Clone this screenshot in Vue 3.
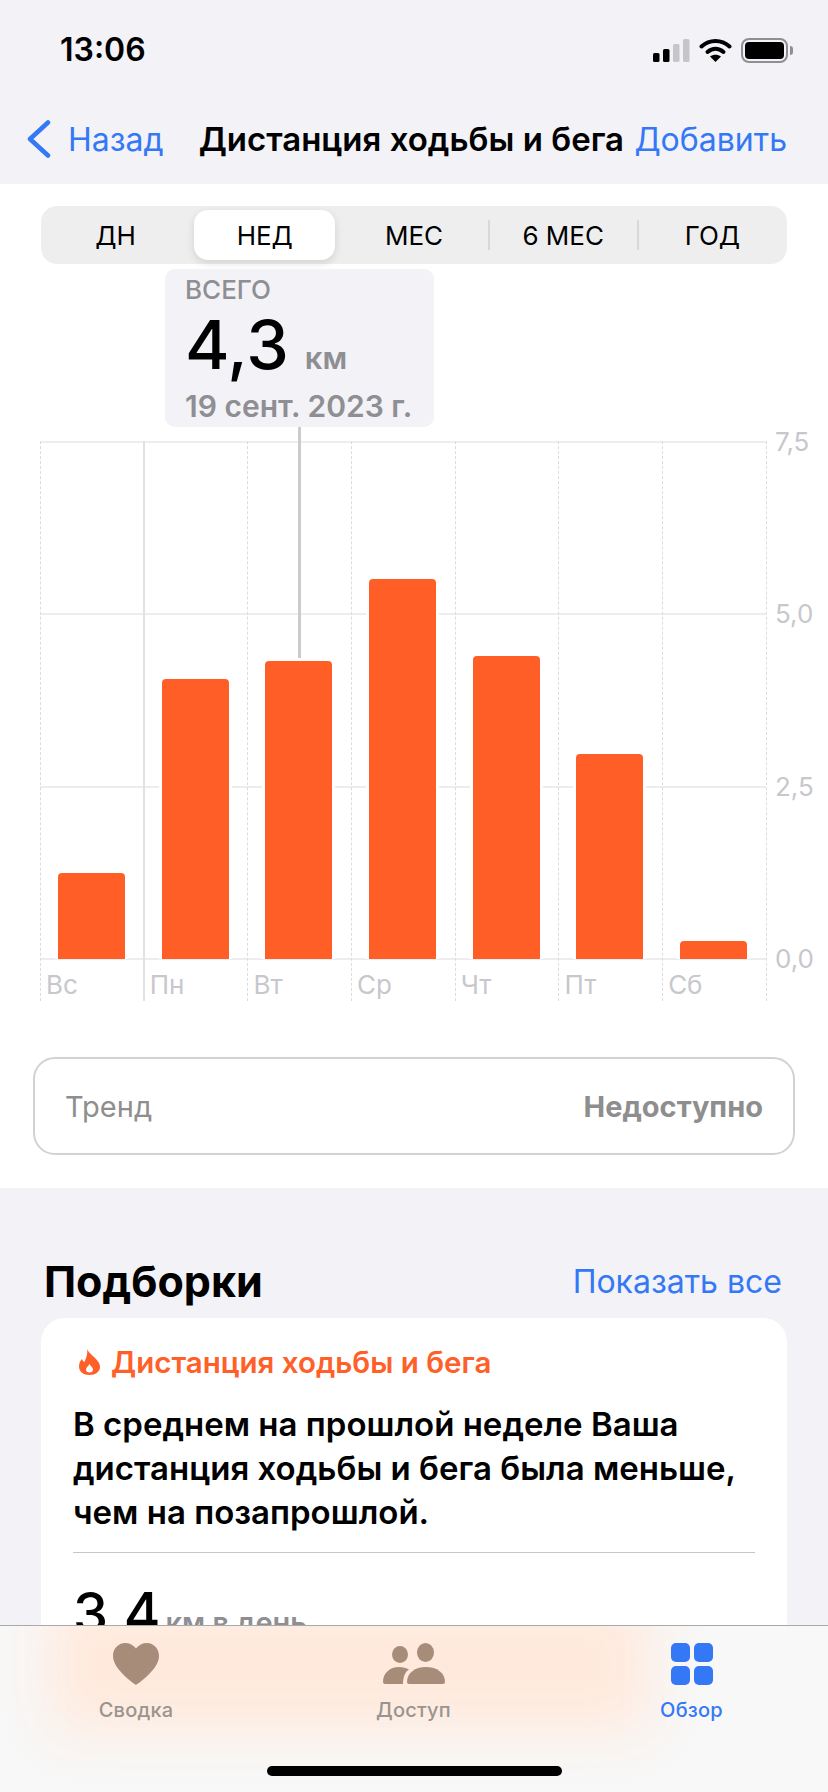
<script setup>
import { ref } from "vue";

const ranges = ref(["ДН", "НЕД", "МЕС", "6 МЕС", "ГОД"]);
const days = ref([
  { name: "Вс", height: 86 },
  { name: "Пн", height: 280 },
  { name: "Вт", height: 298 },
  { name: "Ср", height: 380 },
  { name: "Чт", height: 303 },
  { name: "Пт", height: 205 },
  { name: "Сб", height: 18 },
]);
const scale = ref(["7,5", "5,0", "2,5", "0,0"]);
</script>

<template>
  <div class="phone">
    <header class="top">
      <div class="status">
        <span class="time">13:06</span>
        <div class="status_icons">
          <svg width="37" height="23" viewBox="0 0 37 23">
            <rect x="0" y="14" width="6.500" height="9" rx="1.500" fill="#000" />
            <rect x="10" y="10" width="6.500" height="13" rx="1.500" fill="#000" />
            <rect x="20" y="5" width="6.500" height="18" rx="1.500" fill="#c6c6c8" />
            <rect x="30" y="0" width="6.500" height="23" rx="1.500" fill="#c6c6c8" />
          </svg>
          <svg width="33" height="24" viewBox="0 0 32 24">
            <path d="M2 8.500C10 1 22 1 30 8.500" fill="none" stroke="#000" stroke-width="4" stroke-linecap="round" />
            <path d="M8 14c5-4.300 11-4.300 16 0" fill="none" stroke="#000" stroke-width="4" stroke-linecap="round" />
            <path d="M16 24l-5.500-5.500c3.200-2.300 7.800-2.300 11 0z" fill="#000" />
          </svg>
          <div class="battery"><i></i></div>
        </div>
      </div>
      <nav class="nav">
        <a class="back">
          <svg width="26" height="38" viewBox="0 0 26 38">
            <path d="M22 2.500L4 19l18 16.500" fill="none" stroke="#3478f6" stroke-width="4.500" stroke-linecap="round" stroke-linejoin="round" />
          </svg>
          <span>Назад</span>
        </a>
        <h1>Дистанция ходьбы и бега</h1>
        <a class="add">Добавить</a>
      </nav>
    </header>

    <section class="sheet">
      <div class="segments">
        <div v-for="(r, i) in ranges" :key="r" class="segment" :class="{ active: i === 1, split: i > 2 }">{{ r }}</div>
      </div>

      <div class="chart_wrap">
        <div class="tooltip">
          <div class="tip_label">ВСЕГО</div>
          <div class="tip_value">4,3<small>км</small></div>
          <div class="tip_date">19 сент. 2023 г.</div>
        </div>
        <div class="tip_line"></div>

        <div class="chart">
          <div class="plot">
            <div class="h_lines">
              <i v-for="s in scale" :key="s"></i>
            </div>
            <div class="days">
              <div v-for="(d, i) in days" :key="d.name" class="day" :class="{ solid: i === 1 }">
                <div class="bar_area">
                  <div class="bar" :style="{ height: d.height + 'px' }"></div>
                </div>
                <div class="day_name">{{ d.name }}</div>
              </div>
            </div>
          </div>
          <div class="scale">
            <span v-for="s in scale" :key="s">{{ s }}</span>
          </div>
        </div>
      </div>

      <div class="trend">
        <span>Тренд</span>
        <b>Недоступно</b>
      </div>
    </section>

    <section class="picks">
      <div class="picks_head">
        <h2>Подборки</h2>
        <a>Показать все</a>
      </div>
      <div class="card">
        <div class="card_title">
          <svg width="21" height="26" viewBox="0 0 21 26">
            <path fill-rule="evenodd" d="M8 0C9 3 12 5 15 8 18.500 11.500 21 14 21 18 21 22.500 16.500 26 10.500 26 4.500 26 0 22.500 0 17.500 0 14 1.500 11.500 3 10 3.500 11.500 4.500 12.500 5.500 13 7 9 9 5 8 0zM10.500 15C9.500 17 7 18.500 7 20.500 7 22.500 8.500 23.500 10.500 23.500 12.500 23.500 14 22.500 14 20.500 14 18.500 11.500 17 10.500 15z" fill="#ff6029" />
          </svg>
          <span>Дистанция ходьбы и бега</span>
        </div>
        <p>В среднем на прошлой неделе Ваша дистанция ходьбы и бега была меньше, чем на позапрошлой.</p>
        <div class="card_line"></div>
        <div class="card_value">3,4<small>км в день</small></div>
      </div>
    </section>

    <footer class="tabs">
      <div class="tabs_glow"></div>
      <div class="tab">
        <svg width="46" height="42" viewBox="0 0 46 42">
          <path d="M23 42C23 42 0 27 0 13 0 5.500 5.500 0 12 0 16.500 0 20.500 2 23 5.500 25.500 2 29.500 0 34 0 40.500 0 46 5.500 46 13 46 27 23 42 23 42z" fill="#a88c7a" />
        </svg>
        <span>Сводка</span>
      </div>
      <div class="tab">
        <svg width="62" height="42" viewBox="0 0 62 42">
          <ellipse cx="17" cy="11.500" rx="8" ry="8.500" fill="#a88c7a" />
          <ellipse cx="42.500" cy="9.500" rx="8.500" ry="9.500" fill="#a88c7a" />
          <path d="M0 39C0 30 7 24 16 24 20 24 23.500 25 26 26.500 22 29 20 34 20 41H2C1 41 0 40 0 39z" fill="#a88c7a" />
          <path d="M24 39C24 30 32 24 43 24 54 24 62 30 62 39 62 40 61 41 60 41H26C25 41 24 40 24 39z" fill="#a88c7a" />
        </svg>
        <span>Доступ</span>
      </div>
      <div class="tab current">
        <div class="grid_icon"><i></i><i></i><i></i><i></i></div>
        <span>Обзор</span>
      </div>
      <div class="home"></div>
    </footer>
  </div>
</template>

<style scoped>
.phone {
  position: relative;
  width: 828px;
  height: 1792px;
  overflow: hidden;
  background: #f2f2f7;
  font-family: Inter, "Noto Sans", sans-serif;
  color: #000;
}

.top {
  height: 184px;
  display: flex;
  flex-direction: column;
}

.status {
  height: 100px;
  display: flex;
  justify-content: space-between;
  align-items: center;
  padding: 0 34px 0 60px;
}

.time {
  font-size: 32px;
  font-weight: 600;
  margin-top: -2px;
}

.status_icons {
  display: flex;
  align-items: center;
  gap: 9px;
}

.battery {
  position: relative;
  width: 47px;
  height: 25px;
  box-sizing: border-box;
  border: 2px solid #8e8e93;
  border-radius: 8px;
  padding: 2px;
  margin-right: 6px;
}

.battery i {
  display: block;
  height: 100%;
  background: #000;
  border-radius: 4px;
}

.battery::after {
  content: "";
  position: absolute;
  right: -7px;
  top: 6px;
  width: 3px;
  height: 9px;
  background: #8e8e93;
  border-radius: 0 3px 3px 0;
}

.nav {
  display: flex;
  align-items: center;
  height: 52px;
  padding: 13px 41px 0 26px;
  font-size: 32px;
  color: #3478f6;
}

.back {
  display: flex;
  align-items: center;
  gap: 16px;
}

.nav h1 {
  margin: 0 0 0 35px;
  font-size: 33px;
  font-weight: 600;
  color: #000;
}

.add {
  margin-left: auto;
}

.sheet {
  height: 1004px;
  background: #fff;
  padding-top: 22px;
  box-sizing: border-box;
}

.segments {
  display: flex;
  margin: 0 41px;
  height: 58px;
  padding: 4px 0;
  box-sizing: border-box;
  background: #eeeeef;
  border-radius: 16px;
  font-size: 26px;
}

.segment {
  position: relative;
  flex: 1;
  display: flex;
  align-items: center;
  justify-content: center;
  margin: 0 4px;
}

.segment.active {
  background: #fff;
  border-radius: 14px;
  box-shadow: 0 3px 8px rgba(0, 0, 0, 0.12);
}

.segment.split::before {
  content: "";
  position: absolute;
  left: -5px;
  top: 10px;
  bottom: 10px;
  width: 2px;
  background: #d8d8da;
}

.chart_wrap {
  position: relative;
  margin-top: 177px;
}

.tooltip {
  position: absolute;
  left: 165px;
  top: -172px;
  width: 269px;
  height: 158px;
  box-sizing: border-box;
  padding: 5px 20px;
  background: #f2f2f7;
  border-radius: 10px;
  color: #8e8e93;
  font-weight: 600;
  z-index: 2;
}

.tip_label {
  font-size: 26px;
  line-height: 32px;
  font-weight: 500;
}

.tip_value {
  font-size: 68px;
  line-height: 68px;
  font-weight: 500;
  color: #000;
  margin-top: 4px;
}

.tip_value small {
  font-size: 31px;
  font-weight: 600;
  color: #8e8e93;
  margin-left: 16px;
}

.tip_date {
  font-size: 30px;
  line-height: 36px;
  margin-top: -4px;
  white-space: nowrap;
}

.tip_line {
  position: absolute;
  left: 298px;
  top: -14px;
  width: 3px;
  height: 231px;
  background: #cbcbcb;
  z-index: 2;
}

.chart {
  display: flex;
  height: 560px;
}

.plot {
  position: relative;
  width: 726px;
  margin-left: 40px;
}

.h_lines {
  position: absolute;
  left: 0;
  right: 0;
  top: 0;
  height: 519px;
  display: flex;
  flex-direction: column;
  justify-content: space-between;
}

.h_lines i {
  display: block;
  height: 2px;
  background: #ededef;
}

.days {
  position: relative;
  display: grid;
  grid-template-columns: repeat(7, 103.7px);
  height: 560px;
}

.days::after {
  content: "";
  position: absolute;
  right: -1px;
  top: 0;
  bottom: 0;
  border-right: 1px dashed #dcdcde;
}

.day {
  display: flex;
  flex-direction: column;
  border-left: 1px dashed #dcdcde;
}

.day.solid {
  border-left: 2px solid #e2e2e4;
  margin-left: -1px;
}

.bar_area {
  height: 518px;
  display: flex;
  align-items: flex-end;
  padding-left: 17px;
}

.day.solid .bar_area {
  padding-left: 17px;
}

.bar {
  width: 67px;
  background: #ff5f26;
  border-radius: 4px 4px 0 0;
  box-shadow: -3px 0 #fff, 3px 0 #fff;
}

.day_name {
  padding: 11px 0 0 5px;
  font-size: 26px;
  line-height: 30px;
  color: #c7c7cc;
}

.scale {
  display: flex;
  flex-direction: column;
  justify-content: space-between;
  height: 519px;
  margin-left: 9px;
  font-size: 26px;
  line-height: 24px;
  color: #c7c7cc;
}

.scale span {
  height: 2px;
  display: flex;
  align-items: center;
}

.trend {
  display: flex;
  align-items: center;
  justify-content: space-between;
  height: 98px;
  margin: 56px 33px 0;
  padding: 0 30px;
  box-sizing: border-box;
  border: 2px solid #d2d2d4;
  border-radius: 22px;
  font-size: 29px;
  color: #8e8e8e;
}

.picks {
  padding: 61px 41px 0;
}

.picks_head {
  display: flex;
  align-items: center;
  justify-content: space-between;
  height: 69px;
  padding: 0 5px 5px 3px;
  box-sizing: border-box;
}

.picks_head h2 {
  margin: 0;
  font-size: 43px;
  font-weight: 700;
}

.picks_head a {
  font-size: 32px;
  color: #3478f6;
}

.card {
  background: #fff;
  border-radius: 24px;
  padding: 26px 32px 28px;
}

.card_title {
  display: flex;
  align-items: center;
  gap: 11px;
  padding-left: 6px;
  font-size: 29.500px;
  line-height: 36px;
  font-weight: 600;
  color: #ff6029;
}

.card p {
  margin: 22px 0 0;
  font-size: 33px;
  line-height: 44px;
  font-weight: 600;
}

.card_line {
  height: 1px;
  background: #c6c6c8;
  margin-top: 18px;
}

.card_value {
  margin-top: 30px;
  font-size: 56px;
  line-height: 60px;
  font-weight: 500;
}

.card_value small {
  font-size: 29px;
  font-weight: 600;
  color: #8e8e93;
  margin-left: 5px;
}

.tabs {
  position: absolute;
  left: 0;
  right: 0;
  top: 1625px;
  height: 167px;
  box-sizing: border-box;
  display: grid;
  grid-template-columns: 272px 283px 1fr;
  overflow: hidden;
  background: #f8f8f8;
  border-top: 1px solid #a9a9a9;
}

.tabs_glow {
  position: absolute;
  left: 50px;
  top: -30px;
  width: 600px;
  height: 135px;
  background: #ffe9dc;
  filter: blur(28px);
}

.tab {
  position: relative;
  display: flex;
  flex-direction: column;
  align-items: center;
  height: 100px;
  padding-top: 17px;
  font-size: 20px;
  font-weight: 500;
  letter-spacing: 0.2px;
  color: #9b948e;
}

.tab span {
  margin-top: 13px;
}

.tab.current {
  color: #3478f6;
}

.grid_icon {
  display: grid;
  grid-template-columns: 19px 19px;
  grid-auto-rows: 19px;
  gap: 4px;
  width: 42px;
  height: 42px;
}

.grid_icon i {
  background: #3478f6;
  border-radius: 5px;
}

.home {
  position: absolute;
  left: 267px;
  top: 140px;
  width: 295px;
  height: 10px;
  border-radius: 5px;
  background: #000;
}
</style>
